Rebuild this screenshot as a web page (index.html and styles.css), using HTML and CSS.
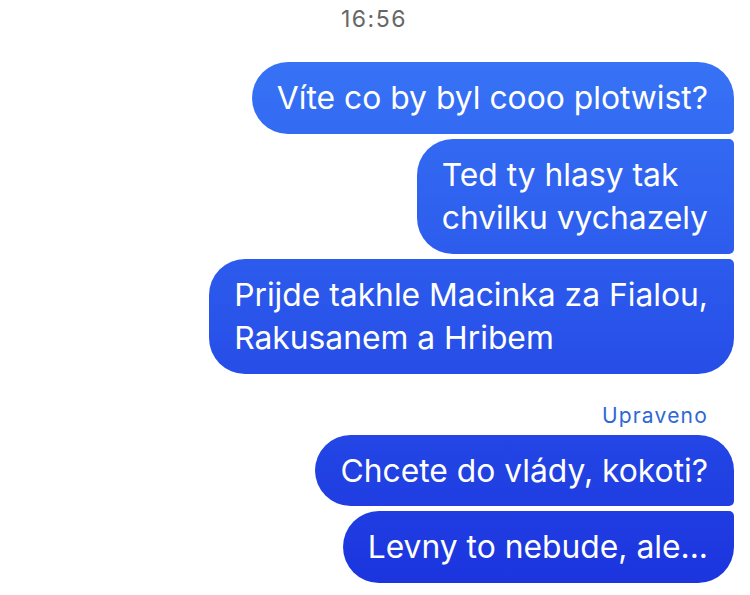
FILE: index.html
```html
<!DOCTYPE html>
<html lang="cs">
<head>
  <meta charset="UTF-8">
  <title>Zprávy</title>
  <link rel="stylesheet" href="styles.css">
</head>
<body>

  <div class="time">16:56</div>

  <div class="thread">
    <div class="bubble first">Víte co by byl cooo plotwist?</div>
    <div class="bubble middle">Ted ty hlasy tak<br>chvilku vychazely</div>
    <div class="bubble last">Prijde takhle Macinka za Fialou,<br>Rakusanem a Hribem</div>

    <div class="edited">Upraveno</div>
    <div class="bubble first">Chcete do vlády, kokoti?</div>
    <div class="bubble last">Levny to nebude, ale...</div>
  </div>

</body>
</html>
```

FILE: styles.css
```css
body {
  margin: 0;
  background: #fff;
  font-family: Inter, "Noto Sans", sans-serif;
}
.time {
  text-align: center;
  color: #666;
  font-size: 23px;
  letter-spacing: 1.5px;
  padding: 5px 2px 0 0;
  height: 35px;
}
.thread {
  display: flex;
  flex-direction: column;
  align-items: flex-end;
  gap: 5px;
  padding: 22px 16px 0 0;
}
.bubble {
  color: #fff;
  font-size: 31.8px;
  line-height: 43.5px;
  padding: 14px 26px 14px 25px;
  border-radius: 36px 5px 5px 36px;
  background: linear-gradient(#3a7af8, #1b33de) fixed;
}
.bubble.first { border-radius: 36px 36px 5px 36px; }
.bubble.last { border-radius: 36px 5px 36px 36px; }
.edited {
  color: #2f68d6;
  font-size: 21px;
  letter-spacing: 1.2px;
  margin: 24px 26px 2px 0;
}
```
